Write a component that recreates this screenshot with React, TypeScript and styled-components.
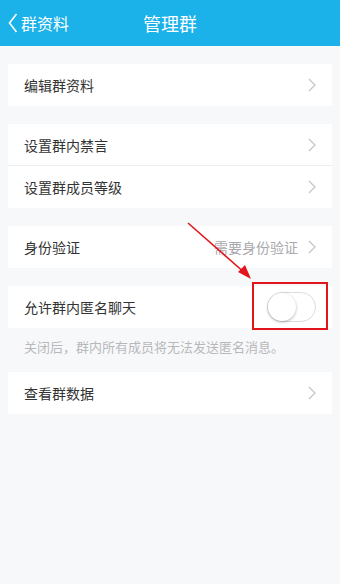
import React from "react";
import styled, { createGlobalStyle } from "styled-components";

const GlobalStyle = createGlobalStyle`
  html, body {
    margin: 0;
    padding: 0;
    background: #f7f8fa;
    font-family: "Noto Sans CJK SC", "Noto Sans", sans-serif;
  }
`;

const Page = styled.div`
  position: relative;
  width: 340px;
  height: 584px;
  background: #f7f8fa;
  overflow: hidden;
`;

const Header = styled.div`
  height: 46px;
  background: #1bb1e9;
  display: grid;
  grid-template-columns: 1fr auto 1fr;
  align-items: center;
  color: #fff;
`;

const Back = styled.div`
  display: flex;
  align-items: center;
  gap: 3px;
  padding-left: 8px;
  font-size: 16px;
`;

const Title = styled.div`
  font-size: 18px;
`;

const Content = styled.div`
  padding: 18px 8px 0;
  display: flex;
  flex-direction: column;
`;

const Group = styled.div<{ $gap?: number }>`
  background: #fff;
  margin-bottom: ${(p) => p.$gap ?? 18}px;
`;

const Row = styled.div<{ $divider?: boolean }>`
  position: relative;
  height: 41px;
  display: flex;
  align-items: center;
  padding: 0 16px;
  border-bottom: 1px solid ${(p) => (p.$divider ? "#ececef" : "transparent")};
  font-size: 14px;
  color: #333;
`;

const Label = styled.span`
  flex: 1;
`;

const Value = styled.span`
  color: #a9a9ad;
  font-size: 14px;
  margin-right: 10px;
`;

const Hint = styled.div`
  font-size: 13px;
  color: #b8b8bb;
  padding: 0 16px;
  height: 44px;
  line-height: 38px;
`;

const Switch = styled.div`
  width: 49px;
  height: 30px;
  border-radius: 15px;
  border: 1px solid #dcdcdc;
  background: #fff;
  box-sizing: border-box;
  position: relative;
`;

const Knob = styled.div`
  position: absolute;
  left: 0;
  top: 0;
  width: 28px;
  height: 28px;
  border-radius: 50%;
  background: #fff;
  box-shadow: 0 1px 3px rgba(0, 0, 0, 0.3);
`;

const RedBox = styled.div`
  position: absolute;
  left: 244px;
  top: -4px;
  width: 72px;
  height: 44px;
  border: 2px solid #e3151c;
`;

const Arrow = styled.svg`
  position: absolute;
  left: 0;
  top: 0;
  pointer-events: none;
`;

const Chevron = () => (
  <svg width="8" height="14" viewBox="0 0 8 14">
    <path d="M1 1 L7 7 L1 13" fill="none" stroke="#c4c4c8" strokeWidth="1.2" />
  </svg>
);

export default function App() {
  return (
    <Page>
      <GlobalStyle />
      <Header>
        <Back>
          <svg width="10" height="20" viewBox="0 0 10 20">
            <path d="M8.5 1 L1.5 10 L8.5 19" fill="none" stroke="#fff" strokeWidth="1.6" />
          </svg>
          群资料
        </Back>
        <Title>管理群</Title>
        <div />
      </Header>
      <Content>
        <Group>
          <Row>
            <Label>编辑群资料</Label>
            <Chevron />
          </Row>
        </Group>
        <Group>
          <Row $divider>
            <Label>设置群内禁言</Label>
            <Chevron />
          </Row>
          <Row>
            <Label>设置群成员等级</Label>
            <Chevron />
          </Row>
        </Group>
        <Group>
          <Row>
            <Label>身份验证</Label>
            <Value>需要身份验证</Value>
            <Chevron />
          </Row>
        </Group>
        <Group $gap={0}>
          <Row>
            <Label>允许群内匿名聊天</Label>
            <Switch>
              <Knob />
            </Switch>
            <RedBox />
          </Row>
        </Group>
        <Hint>关闭后，群内所有成员将无法发送匿名消息。</Hint>
        <Group>
          <Row>
            <Label>查看群数据</Label>
            <Chevron />
          </Row>
        </Group>
      </Content>
      <Arrow width="340" height="584" viewBox="0 0 340 584">
        <line x1="188" y1="223" x2="246" y2="274" stroke="#e3151c" strokeWidth="1.6" />
        <path d="M251 279 L238 272 L245 265 Z" fill="#e3151c" />
      </Arrow>
    </Page>
  );
}
